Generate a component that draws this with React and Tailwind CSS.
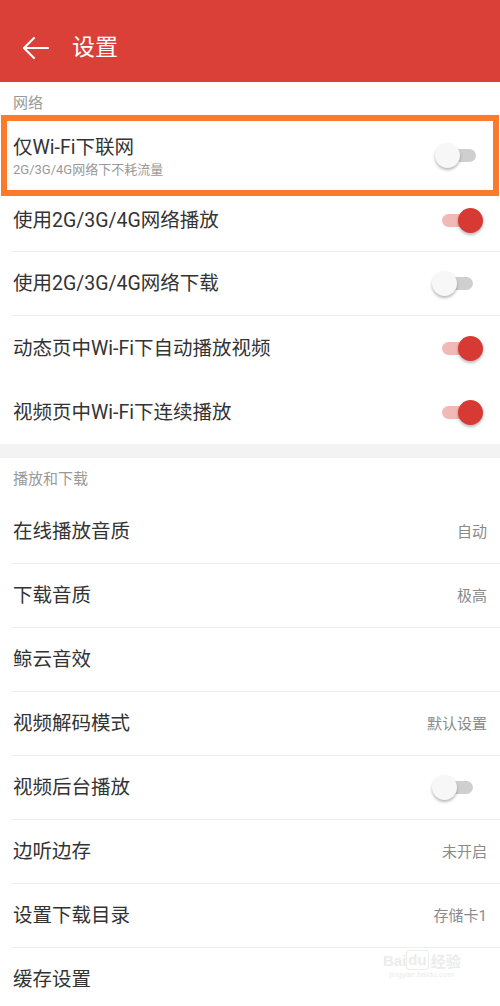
import React from "react";

const FONT = 'Roboto, "Noto Sans CJK SC", "Noto Sans", sans-serif';

function Toggle({ on }) {
  return (
    <div className="relative w-[51px] h-[25px] shrink-0">
      <div
        className={
          "absolute left-[10px] right-[10px] top-[6px] h-[13px] rounded-full " +
          (on ? "bg-[#f1b9b6]" : "bg-[#cfcfcf]")
        }
      />
      <div
        className={
          "absolute top-0 w-[25px] h-[25px] rounded-full shadow-[0_2px_3px_rgba(0,0,0,0.28)] " +
          (on ? "right-0 bg-[#d63a33]" : "left-0 bg-[#f7f7f7]")
        }
      />
    </div>
  );
}

function Row({ title, value, toggle, h = "h-[64px]", divider = true, pad = "" }) {
  return (
    <div className="pl-[12px]">
      <div
        className={
          "flex items-center pl-[1px] pr-[13px] " +
          h +
          " " +
          pad +
          (divider ? " border-b border-[#ededed]" : "")
        }
      >
        <div className="flex-1 text-[19.5px] text-[#333333] leading-[24px]">{title}</div>
        {value && <div className="text-[15px] text-[#8a8a8a] leading-[20px]">{value}</div>}
        {toggle !== undefined && (
          <div className="mr-[4px]">
            <Toggle on={toggle} />
          </div>
        )}
      </div>
    </div>
  );
}

export default function App() {
  return (
    <div
      className="relative w-[500px] h-[1006px] overflow-hidden bg-white"
      style={{ fontFamily: FONT }}
    >
      <div className="h-[82px] bg-[#da3f38] flex items-center pl-[22px] pt-[14px]">
        <svg width="27" height="24" viewBox="0 0 27 24" fill="none" stroke="white" strokeWidth="2.2" strokeLinecap="round" strokeLinejoin="round">
          <path d="M26 12H2" />
          <path d="M12 2L2 12l10 10" />
        </svg>
        <div className="ml-[23px] text-[23px] text-white leading-[28px]">设置</div>
      </div>

      <div className="h-[33px] pt-[10px] pl-[13px] text-[15px] text-[#999999] leading-[23px]">网络</div>

      <div className="mx-[1px] h-[81px] border-[6px] border-[#fb7a2b] flex items-center pl-[6px] pr-[7px]">
        <div className="flex-1 flex flex-col pt-[3px]">
          <div className="text-[19.5px] text-[#333333] leading-[24px]">仅Wi-Fi下联网</div>
          <div className="mt-[2px] text-[13px] text-[#999999] leading-[16px]">2G/3G/4G网络下不耗流量</div>
        </div>
        <Toggle on={false} />
      </div>

      <Row title="使用2G/3G/4G网络播放" toggle={true} h="h-[56px]" pad="pb-[6px]" />
      <Row title="使用2G/3G/4G网络下载" toggle={false} />
      <Row title="动态页中Wi-Fi下自动播放视频" toggle={true} h="h-[65px]" divider={false} />
      <Row title="视频页中Wi-Fi下连续播放" toggle={true} h="h-[63px]" divider={false} />

      <div className="h-[14px] bg-[#f3f3f3]" />

      <div className="h-[42px] pt-[9px] pl-[13px] text-[15px] text-[#999999] leading-[25px]">播放和下载</div>

      <Row title="在线播放音质" value="自动" />
      <Row title="下载音质" value="极高" />
      <Row title="鲸云音效" />
      <Row title="视频解码模式" value="默认设置" />
      <Row title="视频后台播放" toggle={false} />
      <Row title="边听边存" value="未开启" />
      <Row title="设置下载目录" value="存储卡1" />
      <Row title="缓存设置" divider={false} />

      <div className="absolute left-[383px] top-[950px] flex flex-col items-center text-[#ececec] pointer-events-none">
        <div className="flex items-end text-[15px] font-bold leading-[18px]" style={{ fontFamily: '"Liberation Sans", sans-serif' }}>
          <span>Bai</span>
          <span className="px-[1px] rounded-[3px] border border-[#ececec]">du</span>
          <span className="ml-[2px]" style={{ fontFamily: '"Noto Sans CJK SC", sans-serif' }}>经验</span>
        </div>
        <div className="text-[8px] leading-[10px]" style={{ fontFamily: '"Liberation Sans", sans-serif' }}>jingyan.baidu.com</div>
      </div>
    </div>
  );
}
